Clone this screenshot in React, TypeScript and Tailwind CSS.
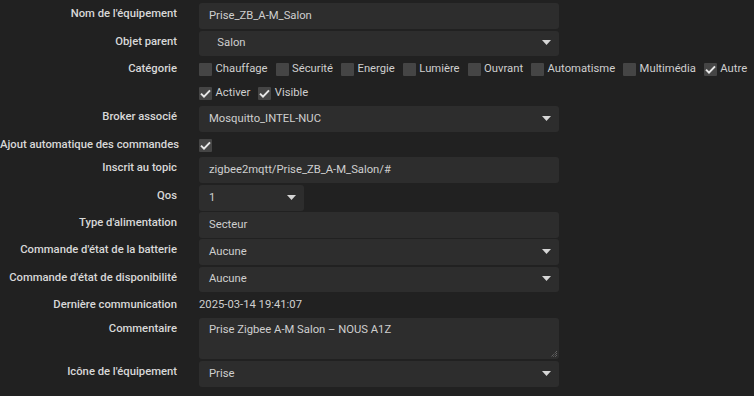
import React from "react";

const Caret = () => (
  <svg width="9" height="5" viewBox="0 0 9 5" className="shrink-0 -mt-[2px]">
    <path d="M0 0h9L4.5 5z" fill="#d6d6d6" />
  </svg>
);

const Check = ({ checked }: { checked?: boolean }) => (
  <span className="w-[13px] h-[13px] bg-[#454545] rounded-[1px] flex items-center justify-center shrink-0">
    {checked && (
      <svg width="11" height="9" viewBox="0 0 11 9">
        <path d="M1 4.6l3 3L10 1.4" stroke="#e6e6e6" strokeWidth="2" fill="none" />
      </svg>
    )}
  </span>
);

function Row({
  label,
  h,
  mb,
  plain,
  children,
}: {
  label: string;
  h: string;
  mb: string;
  plain?: boolean;
  children?: React.ReactNode;
}) {
  return (
    <div className={`flex items-start ${h} ${mb}`}>
      <div
        className={`w-[177px] shrink-0 text-right whitespace-nowrap font-medium text-[#d8d8d8] leading-[14px] ${
          plain ? "pt-[6px]" : "pt-[4px]"
        }`}
      >
        {label}
      </div>
      <div className="ml-[22px] w-[360px] h-full">{children}</div>
    </div>
  );
}

const Input = ({ value, select, w }: { value: string; select?: boolean; w?: string }) => (
  <div className={`h-full ${w ?? "w-full"} bg-[#2d2d2d] rounded-[3px] flex items-center justify-between pl-[10px] pr-[8px] text-[#cfcfcf]`}>
    <span className="whitespace-pre">{value}</span>
    {select && <Caret />}
  </div>
);

const categories = [
  ["Chauffage", false],
  ["Sécurité", false],
  ["Energie", false],
  ["Lumière", false],
  ["Ouvrant", false],
  ["Automatisme", false],
  ["Multimédia", false],
  ["Autre", true],
] as const;

export default function App() {
  return (
    <div className="w-[754px] h-[396px] bg-[#212121] pt-[3px] text-[11.25px] overflow-hidden font-['Roboto',sans-serif]">
      <Row label="Nom de l'équipement" h="h-[26px]" mb="mb-[2px]">
        <Input value="Prise_ZB_A-M_Salon" />
      </Row>
      <Row label="Objet parent" h="h-[25px]" mb="">
        <Input value="   Salon" select />
      </Row>
      <Row label="Catégorie" h="h-[25px]" mb="" plain>
        <div className="flex items-center h-full gap-[8px] text-[#cfcfcf] whitespace-nowrap pt-[1px]">
          {categories.map(([c, on]) => (
            <span key={c} className="flex items-center gap-[3.5px]">
              <Check checked={on} />
              {c}
            </span>
          ))}
        </div>
      </Row>
      <Row label="" h="h-[24px]" mb="mb-[1px]">
        <div className="flex items-center h-full gap-[8px] text-[#cfcfcf]">
          <span className="flex items-center gap-[3.5px]">
            <Check checked />
            Activer
          </span>
          <span className="flex items-center gap-[3.5px]">
            <Check checked />
            Visible
          </span>
        </div>
      </Row>
      <Row label="Broker associé" h="h-[26px]" mb="">
        <Input value="Mosquitto_INTEL-NUC" select />
      </Row>
      <Row label="Ajout automatique des commandes" h="h-[24px]" mb="mb-[1px]" plain>
        <div className="flex items-center h-full pt-[2px]">
          <Check checked />
        </div>
      </Row>
      <Row label="Inscrit au topic" h="h-[26px]" mb="mb-[2px]">
        <Input value="zigbee2mqtt/Prise_ZB_A-M_Salon/#" />
      </Row>
      <Row label="Qos" h="h-[26px]" mb="mb-[1px]">
        <Input value="1" select w="w-[105px]" />
      </Row>
      <Row label="Type d'alimentation" h="h-[26px]" mb="mb-[1px]">
        <Input value="Secteur" />
      </Row>
      <Row label="Commande d'état de la batterie" h="h-[26px]" mb="mb-[2px]">
        <Input value="Aucune" select />
      </Row>
      <Row label="Commande d'état de disponibilité" h="h-[25px]" mb="">
        <Input value="Aucune" select />
      </Row>
      <Row label="Dernière communication" h="h-[25px]" mb="mb-[1px]" plain>
        <div className="h-full flex items-center text-[#cfcfcf] pt-[1px]">2025-03-14 19:41:07</div>
      </Row>
      <Row label="Commentaire" h="h-[41px]" mb="mb-[2px]">
        <div className="relative h-full bg-[#2d2d2d] rounded-[3px] pl-[10px] pt-[4px] text-[#cfcfcf]">
          Prise Zigbee A-M Salon – NOUS A1Z
          <svg width="7" height="7" viewBox="0 0 7 7" className="absolute right-[1px] bottom-[1px]">
            <path d="M6 0L0 6M6 2L2 6M6 4L4 6" stroke="#7a7a7a" strokeWidth="1" strokeDasharray="1 1" />
          </svg>
        </div>
      </Row>
      <Row label="Icône de l'équipement" h="h-[26px]" mb="">
        <Input value="Prise" select />
      </Row>
    </div>
  );
}
